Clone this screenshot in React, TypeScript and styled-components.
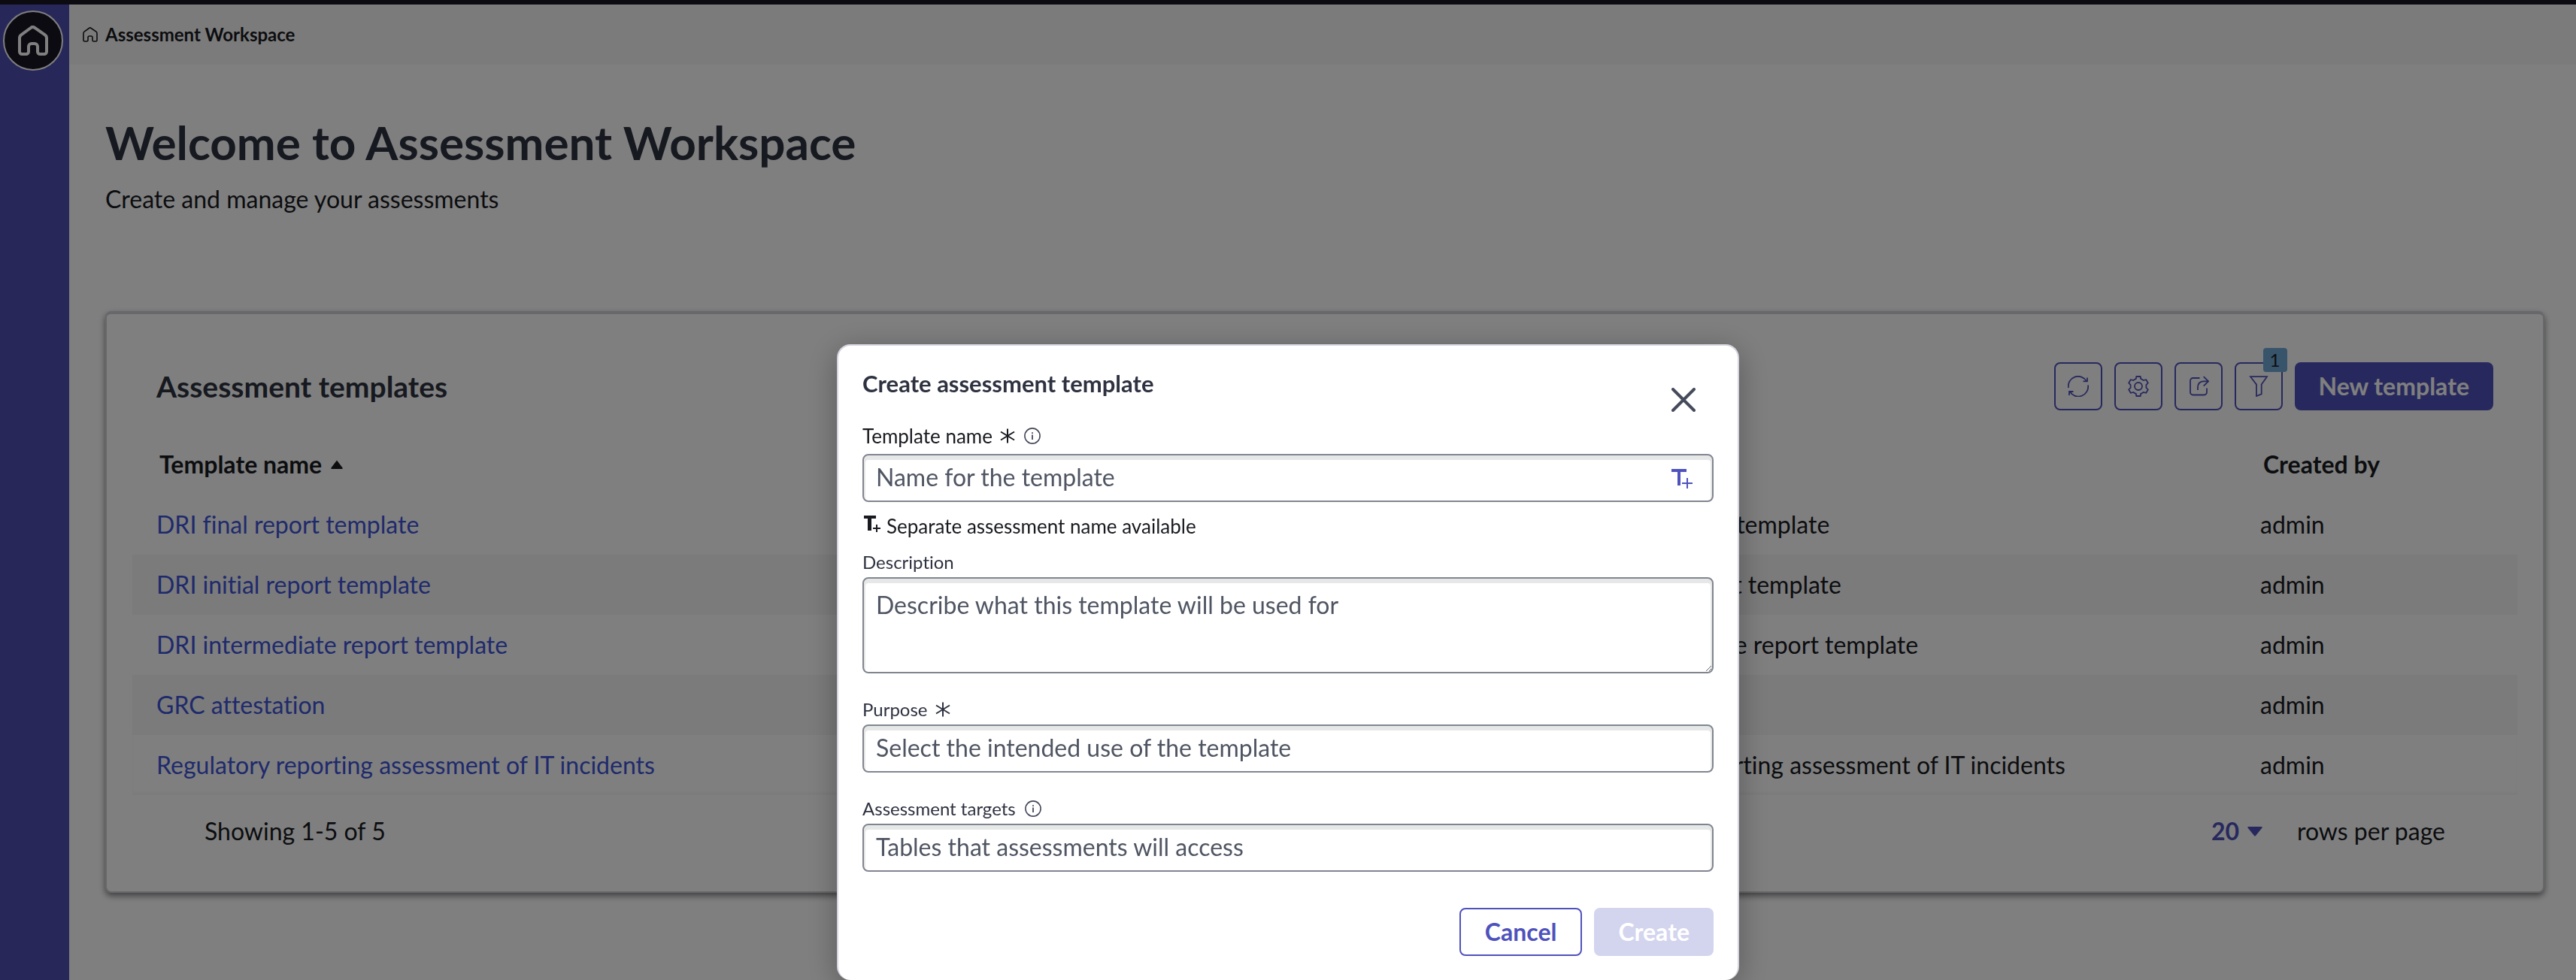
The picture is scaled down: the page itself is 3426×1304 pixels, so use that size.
import React from "react";
import styled, { createGlobalStyle, css } from "styled-components";

const color = {
  brand: "#4f52bd",
  sidebar: "#4f51b3",
  link: "#3e54d8",
  ink: "#181a1f",
  heading: "#2e3240",
  placeholder: "#4f5562",
  fieldBorder: "#81858f",
  stripe: "#f6f6f7",
};

const GlobalStyle = createGlobalStyle`
  *, *::before, *::after { box-sizing: border-box; }
  body {
    margin: 0;
    background: #fff;
    color: ${color.ink};
    font-family: Lato, "Open Sans", sans-serif;
    font-size: 32px;
    font-variant-ligatures: none;
    line-height: 40px;
  }
  button, input, select, textarea { font: inherit; color: inherit; }
`;

/* ---------- page shell ---------- */

const Shell = styled.div`
  display: grid;
  grid-template-columns: 92px minmax(0, 1fr);
  grid-template-rows: auto 1fr;
  min-height: 100vh;
`;

const TopBar = styled.div`
  grid-column: 1 / -1;
  height: 6px;
  background: #1a1724;
`;

const Sidebar = styled.nav`
  display: flex;
  flex-direction: column;
  align-items: flex-start;
  padding: 8px 4px;
  background: ${color.sidebar};
`;

const HomeLink = styled.a`
  display: grid;
  place-items: center;
  width: 80px;
  height: 80px;
  border: 2px solid #fff;
  border-radius: 50%;
  background: #1a1724;
  color: #fff;
`;

const Main = styled.div`
  display: flex;
  flex-direction: column;
  min-width: 0;
`;

const Breadcrumb = styled.nav`
  display: flex;
  align-items: center;
  gap: 10px;
  height: 80px;
  padding: 0 18px;
  background: ${color.stripe};
`;

const Crumb = styled.a`
  color: ${color.ink};
  font-size: 24px;
  font-weight: 700;
  line-height: 32px;
  text-decoration: none;
`;

const Content = styled.main`
  display: flex;
  flex-direction: column;
  gap: 128px;
  padding: 64px 42px 64px 48px;
`;

const Intro = styled.header`
  display: flex;
  flex-direction: column;
  gap: 16px;
`;

const PageTitle = styled.h1`
  margin: 0;
  color: ${color.heading};
  font-size: 62px;
  font-weight: 700;
  line-height: 78px;
`;

const Lead = styled.p`
  margin: 0;
  line-height: 42px;
`;

/* ---------- list card ---------- */

const Card = styled.section`
  padding: 64px 34px 32px;
  border: 2px solid #cfd0d8;
  border-top-width: 4px;
  border-radius: 8px;
  background: #fff;
  box-shadow: 0 4px 8px rgba(0, 0, 0, 0.5);
`;

const CardHeader = styled.div`
  display: flex;
  align-items: center;
  justify-content: space-between;
  padding: 0 32px;
  margin-bottom: 32px;
`;

const CardTitle = styled.h2`
  margin: 0;
  color: ${color.heading};
  font-size: 39px;
  font-weight: 700;
  line-height: 48px;
`;

const Toolbar = styled.div`
  display: flex;
  gap: 16px;
`;

const Button = styled.button<{ $variant?: "primary" | "outline" }>`
  height: 64px;
  padding: 0 32px;
  border: 2px solid ${color.brand};
  border-radius: 8px;
  font-weight: 700;
  cursor: pointer;
  ${({ $variant = "outline" }) =>
    $variant === "primary"
      ? css`
          border: 0;
          background: ${color.brand};
          color: #fff;
        `
      : css`
          background: #fff;
          color: ${color.brand};
        `}
  &:disabled {
    background: #d3d4ee;
    cursor: default;
  }
`;

const IconButton = styled.button`
  position: relative;
  display: grid;
  place-items: center;
  width: 64px;
  height: 64px;
  padding: 0;
  border: 2px solid ${color.brand};
  border-radius: 8px;
  background: transparent;
  color: ${color.brand};
  cursor: pointer;
`;

const Badge = styled.span`
  position: absolute;
  top: -21px;
  right: -8px;
  width: 32px;
  height: 32px;
  border-radius: 4px;
  background: #70a8d6;
  color: ${color.ink};
  font-size: 24px;
  line-height: 32px;
  text-align: center;
`;

const Table = styled.table`
  width: 100%;
  table-layout: fixed;
  border-collapse: collapse;
`;

const AssessmentCol = styled.col`
  width: 922px;
`;

const AuthorCol = styled.col`
  width: 374px;
`;

const HeadCell = styled.th`
  height: 80px;
  padding: 0 36px;
  font-weight: 700;
  text-align: left;
`;

const SortLabel = styled.span`
  display: flex;
  align-items: center;
  gap: 12px;
`;

const Row = styled.tr`
  &:nth-child(even) {
    background: ${color.stripe};
  }
  &:last-child {
    box-shadow: inset 0 -4px 4px rgba(0, 0, 0, 0.03);
  }
`;

const Cell = styled.td`
  height: 80px;
  padding: 0 32px;
`;

const RecordLink = styled.a`
  color: ${color.link};
  text-decoration: none;
`;

const Pager = styled.footer`
  display: flex;
  align-items: center;
  justify-content: space-between;
  height: 96px;
  padding: 0 96px;
`;

const PageSize = styled.label`
  display: flex;
  align-items: center;
  gap: 46px;
`;

const SelectWrap = styled.span`
  display: flex;
  align-items: center;
  gap: 10px;
  color: ${color.brand};
`;

const Select = styled.select`
  padding: 0;
  border: 0;
  background: transparent;
  font-weight: 700;
  appearance: none;
`;

/* ---------- dialog ---------- */

const Overlay = styled.div`
  position: fixed;
  inset: 0;
  display: flex;
  align-items: flex-end;
  justify-content: center;
  background: rgba(0, 0, 0, 0.5);
`;

const Dialog = styled.form`
  width: 1200px;
  max-width: 100%;
  padding: 32px;
  border: 2px solid #d4d4de;
  border-bottom: 0;
  border-radius: 18px;
  background: #fff;
  box-shadow: 0 8px 40px rgba(0, 0, 0, 0.3);
`;

const DialogHeader = styled.div`
  display: flex;
  justify-content: space-between;
`;

const DialogTitle = styled.h2`
  margin: 0;
  color: ${color.heading};
  font-size: 31px;
  font-weight: 700;
  line-height: 36px;
`;

const CloseButton = styled.button`
  display: grid;
  place-items: center;
  width: 64px;
  height: 64px;
  margin: 8px 8px 0 0;
  padding: 0;
  border: 0;
  background: transparent;
  color: #464b5b;
  cursor: pointer;
`;

const Fields = styled.div`
  display: flex;
  flex-direction: column;
  gap: 32px;
`;

const FieldPair = styled.div`
  display: flex;
  flex-direction: column;
  gap: 16px;
`;

const Field = styled.div<{ $large?: boolean }>`
  display: flex;
  flex-direction: column;
  gap: ${({ $large }) => ($large ? 8 : 4)}px;
  color: ${({ $large }) => ($large ? color.ink : color.heading)};
  font-size: ${({ $large }) => ($large ? 26 : 24)}px;
  line-height: 32px;
`;

const LabelRow = styled.div`
  display: flex;
  align-items: center;
  gap: 12px;
`;

const Label = styled.label`
  display: flex;
  align-items: center;
  gap: 10px;
`;

const InfoButton = styled.button`
  display: grid;
  padding: 0;
  border: 0;
  background: transparent;
  color: #464b5b;
  cursor: pointer;
`;

const fieldBox = css`
  width: 100%;
  border: 2px solid ${color.fieldBorder};
  border-radius: 8px;
  background: #fff;
  box-shadow: inset 0 4px 0 2px #e6e8e8;
  font-size: 32px;
  line-height: 40px;
  &::placeholder {
    color: ${color.placeholder};
    opacity: 1;
  }
`;

const TextInput = styled.input`
  ${fieldBox}
  height: 64px;
  padding: 0 16px 4px;
`;

const InputWrap = styled.div`
  position: relative;
  display: flex;
`;

const InputAction = styled.button`
  position: absolute;
  top: 20px;
  right: 28px;
  display: grid;
  padding: 0;
  border: 0;
  background: transparent;
  color: ${color.brand};
  cursor: pointer;
`;

const TextArea = styled.textarea`
  ${fieldBox}
  display: block;
  height: 128px;
  padding: 15px 16px;
  resize: vertical;
`;

const Hint = styled.p`
  display: flex;
  align-items: center;
  gap: 8px;
  margin: 0;
  font-size: 26px;
  line-height: 32px;
`;

const Actions = styled.div`
  display: flex;
  justify-content: flex-end;
  gap: 16px;
  margin-top: 48px;
`;

/* ---------- icons ---------- */

const HomeIcon = ({ size, stroke }: { size: number; stroke: number }) => (
  <svg width={size} height={size} viewBox="0 0 20 20" fill="none" stroke="currentColor" strokeWidth={stroke} aria-hidden="true">
    <path d="M1 8.4C1 7.5 1.4 6.7 2.1 6.2L8.5 1.5a2 2 0 0 1 2.6 0L17.9 6.2C18.6 6.7 19 7.5 19 8.4V17.4A1.6 1.6 0 0 1 17.4 19H14.6A1.6 1.6 0 0 1 13 17.4V14a2 2 0 0 0-2-2H9a2 2 0 0 0-2 2V17.4A1.6 1.6 0 0 1 5.4 19H2.6A1.6 1.6 0 0 1 1 17.4Z" />
  </svg>
);

const ToolIcon = ({ children }: { children: React.ReactNode }) => (
  <svg width="28" height="28" viewBox="0 0 28 28" fill="none" stroke="currentColor" strokeWidth="1.8" aria-hidden="true">
    {children}
  </svg>
);

const RefreshIcon = () => (
  <ToolIcon>
    <path d="M1 16A13 13 0 0 1 25 7.2M26 2.5V7.4H20.5" />
    <path d="M27 12.5A13 13 0 0 1 3 21.2M2 26V21H7.5" />
  </ToolIcon>
);

const GearIcon = () => (
  <ToolIcon>
    <path d="M11.4 1H16.6L17.3 4.2Q19.4 4.9 20.6 6.1L24.3 5.2 26.8 9.6 24.3 12.2Q24.6 14 24.3 15.8L26.8 18.4 24.3 22.8 20.6 21.9Q19.4 23.1 17.3 23.8L16.6 27H11.4L10.7 23.8Q8.6 23.1 7.4 21.9L3.7 22.8 1.2 18.4 3.7 15.8Q3.4 14 3.7 12.2L1.2 9.6 3.7 5.2 7.4 6.1Q8.6 4.9 10.7 4.2Z" />
    <circle cx="14" cy="14" r="5" />
  </ToolIcon>
);

const ShareIcon = () => (
  <ToolIcon>
    <path d="M15.5 3H6.5A3.5 3.5 0 0 0 3 6.5V22A3.5 3.5 0 0 0 6.5 25.5H21.5A3.5 3.5 0 0 0 25 22V16.5" />
    <path d="M13 19V16C13 10.5 16 7.4 21 7.4H27M20.7 1.2 27 7.4 20.7 13.6" />
  </ToolIcon>
);

const FilterIcon = () => (
  <ToolIcon>
    <path d="M3 1.2H25L17.7 11.6V24.4L11 27V11.6Z" />
  </ToolIcon>
);

const SortIcon = () => (
  <svg width="16" height="13" viewBox="0 0 16 13" fill="currentColor" aria-hidden="true">
    <path d="M8 0.5 15.4 10.2C16 11.2 15.6 12 14.6 12H1.4C.4 12 0 11.2.6 10.2Z" />
  </svg>
);

const CaretIcon = () => (
  <svg width="20" height="13" viewBox="0 0 20 13" fill="currentColor" aria-hidden="true">
    <path d="M1.2 0H18.8C19.8 0 20 .8 19.5 1.5L11 12Q10 13 9 12L.5 1.5C0 .8.2 0 1.2 0Z" />
  </svg>
);

const CloseIcon = () => (
  <svg width="32" height="32" viewBox="0 0 32 32" fill="none" stroke="currentColor" strokeWidth="4" strokeLinecap="round" aria-hidden="true">
    <path d="M2 2 30 30M30 2 2 30" />
  </svg>
);

const RequiredIcon = () => (
  <svg width="20" height="20" viewBox="0 0 20 20" fill="none" stroke="currentColor" strokeWidth="2" aria-hidden="true">
    <path d="M10 .5V19.5M1 4.5 19 15.5M19 4.5 1 15.5" />
  </svg>
);

const InfoIcon = () => (
  <svg width="22" height="22" viewBox="0 0 22 22" fill="none" stroke="currentColor" strokeWidth="1.6" aria-hidden="true">
    <circle cx="11" cy="11" r="10.1" />
    <path d="M11 6.2V8M11 9.6V16" strokeWidth="1.8" />
  </svg>
);

const TextPlusIcon = () => (
  <svg width="28" height="27" viewBox="0 0 28 27" fill="currentColor" aria-hidden="true">
    <rect x="0" y="0" width="20" height="4" />
    <rect x="8" y="0" width="4" height="22" />
    <rect x="14" y="18" width="14" height="2" />
    <rect x="20" y="12" width="2" height="14" />
  </svg>
);

const TextPlusSmallIcon = () => (
  <svg width="24" height="32" viewBox="0 0 24 32" fill="currentColor" aria-hidden="true">
    <rect x="2" y="2" width="16" height="4" />
    <rect x="7" y="2" width="5" height="20" />
    <rect x="14" y="18" width="10" height="2" />
    <rect x="18" y="14" width="2" height="10" />
  </svg>
);

/* ---------- data ---------- */

const templates = [
  "DRI final report template",
  "DRI initial report template",
  "DRI intermediate report template",
  "GRC attestation",
  "Regulatory reporting assessment of IT incidents",
];

export default function App() {
  return (
    <>
      <GlobalStyle />
      <Shell>
        <TopBar />
        <Sidebar aria-label="Workspace">
          <HomeLink href="#home" aria-label="Home">
            <HomeIcon size={40} stroke={2} />
          </HomeLink>
        </Sidebar>
        <Main>
          <Breadcrumb aria-label="Breadcrumb">
            <HomeIcon size={20} stroke={1.6} />
            <Crumb href="#home">Assessment Workspace</Crumb>
          </Breadcrumb>
          <Content>
            <Intro>
              <PageTitle>Welcome to Assessment Workspace</PageTitle>
              <Lead>Create and manage your assessments</Lead>
            </Intro>
            <Card>
              <CardHeader>
                <CardTitle>Assessment templates</CardTitle>
                <Toolbar>
                  <IconButton type="button" aria-label="Refresh">
                    <RefreshIcon />
                  </IconButton>
                  <IconButton type="button" aria-label="Settings">
                    <GearIcon />
                  </IconButton>
                  <IconButton type="button" aria-label="Export">
                    <ShareIcon />
                  </IconButton>
                  <IconButton type="button" aria-label="Filter">
                    <FilterIcon />
                    <Badge>1</Badge>
                  </IconButton>
                  <Button type="button" $variant="primary">
                    New template
                  </Button>
                </Toolbar>
              </CardHeader>
              <Table>
                <colgroup>
                  <col />
                  <AssessmentCol />
                  <AuthorCol />
                </colgroup>
                <thead>
                  <tr>
                    <HeadCell scope="col" aria-sort="ascending">
                      <SortLabel>
                        Template name
                        <SortIcon />
                      </SortLabel>
                    </HeadCell>
                    <HeadCell scope="col">Name</HeadCell>
                    <HeadCell scope="col">Created by</HeadCell>
                  </tr>
                </thead>
                <tbody>
                  {templates.map((name) => (
                    <Row key={name}>
                      <Cell>
                        <RecordLink href="#template">{name}</RecordLink>
                      </Cell>
                      <Cell>{name}</Cell>
                      <Cell>admin</Cell>
                    </Row>
                  ))}
                </tbody>
              </Table>
              <Pager>
                <span>Showing 1-5 of 5</span>
                <PageSize>
                  <SelectWrap>
                    <Select defaultValue="20">
                      <option>20</option>
                      <option>50</option>
                    </Select>
                    <CaretIcon />
                  </SelectWrap>
                  rows per page
                </PageSize>
              </Pager>
            </Card>
          </Content>
        </Main>
      </Shell>

      <Overlay>
        <Dialog role="dialog" aria-modal="true" aria-labelledby="dialog-title">
          <DialogHeader>
            <DialogTitle id="dialog-title">Create assessment template</DialogTitle>
            <CloseButton type="button" aria-label="Close">
              <CloseIcon />
            </CloseButton>
          </DialogHeader>
          <Fields>
            <FieldPair>
              <Field $large>
                <LabelRow>
                  <Label htmlFor="template-name">
                    Template name
                    <RequiredIcon />
                  </Label>
                  <InfoButton type="button" aria-label="About template name">
                    <InfoIcon />
                  </InfoButton>
                </LabelRow>
                <InputWrap>
                  <TextInput id="template-name" placeholder="Name for the template" />
                  <InputAction type="button" aria-label="Add separate assessment name">
                    <TextPlusIcon />
                  </InputAction>
                </InputWrap>
              </Field>
              <Hint>
                <TextPlusSmallIcon />
                Separate assessment name available
              </Hint>
              <Field>
                <Label htmlFor="description">Description</Label>
                <TextArea id="description" placeholder="Describe what this template will be used for" />
              </Field>
            </FieldPair>
            <Field>
              <Label htmlFor="purpose">
                Purpose
                <RequiredIcon />
              </Label>
              <TextInput id="purpose" placeholder="Select the intended use of the template" />
            </Field>
            <Field>
              <LabelRow>
                <Label htmlFor="targets">Assessment targets</Label>
                <InfoButton type="button" aria-label="About assessment targets">
                  <InfoIcon />
                </InfoButton>
              </LabelRow>
              <TextInput id="targets" placeholder="Tables that assessments will access" />
            </Field>
          </Fields>
          <Actions>
            <Button type="button">Cancel</Button>
            <Button type="submit" $variant="primary" disabled>
              Create
            </Button>
          </Actions>
        </Dialog>
      </Overlay>
    </>
  );
}
